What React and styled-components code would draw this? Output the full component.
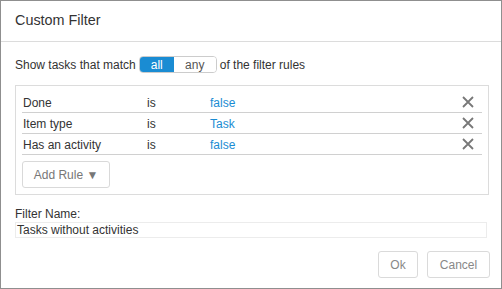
import React from "react";
import styled, { createGlobalStyle } from "styled-components";

const Global = createGlobalStyle`
  html, body { margin: 0; padding: 0; background: #fff; }
  body { font-family: "Liberation Sans", Arial, sans-serif; }
  * { box-sizing: border-box; }
`;

const Dialog = styled.div`
  width: 502px;
  height: 289px;
  border: 1px solid #8f8f8f;
  background: #fff;
  display: flex;
  flex-direction: column;
  color: #333;
  font-size: 12px;
`;

const Header = styled.div`
  height: 41px;
  border-bottom: 1px solid #dcdcdc;
  padding: 0 14px;
  display: flex;
  align-items: center;
`;

const Title = styled.h1`
  margin: 0;
  font-size: 14.4px;
  font-weight: normal;
  color: #333;
  padding-bottom: 2px;
`;

const Body = styled.div`
  flex: 1;
  padding: 0 14px;
  display: flex;
  flex-direction: column;
`;

const MatchLine = styled.div`
  display: flex;
  align-items: center;
  gap: 3px;
  margin-top: 14px;
  height: 17px;
`;

const Toggle = styled.div`
  display: flex;
  height: 17px;
  width: 78px;
  border: 1px solid #ccc;
  border-radius: 4px;
  overflow: hidden;
`;

const ToggleOpt = styled.span`
  display: flex;
  align-items: center;
  justify-content: center;
  width: ${(p) => p.$w}px;
  background: ${(p) => (p.$active ? "#1a8cd3" : "#fff")};
  color: ${(p) => (p.$active ? "#fff" : "#555")};
  font-size: 12px;
  line-height: 1;
`;

const RulesBox = styled.div`
  margin-top: 12px;
  width: 474px;
  border: 1px solid #dcdcdc;
  padding: 6px 6px 6px 6px;
  display: flex;
  flex-direction: column;
`;

const Row = styled.div`
  display: grid;
  grid-template-columns: 124px 63px 1fr 20px;
  align-items: center;
  height: 21px;
  border-bottom: 1px solid #d0d0d0;
  padding-left: 1px;
`;

const Cell = styled.span`
  color: ${(p) => (p.$value ? "#1a8cd3" : "#333")};
  padding-top: 1px;
`;

const Remove = styled.button`
  border: 0;
  background: none;
  padding: 0;
  margin: 0;
  width: 12px;
  height: 12px;
  display: flex;
  cursor: pointer;
`;

const AddRule = styled.button`
  margin-top: 6px;
  width: 88px;
  height: 27px;
  border: 1px solid #d9d9d9;
  border-radius: 3px;
  background: #fff;
  color: #777;
  font-family: "Liberation Sans", Arial, sans-serif;
  font-size: 12px;
  padding: 0;
`;

const Label = styled.div`
  margin-top: 13px;
  line-height: 13px;
  color: #333;
`;

const NameInput = styled.div`
  margin-top: 1px;
  width: 472px;
  height: 16px;
  border: 1px solid #ececec;
  padding: 0 1px;
  line-height: 14px;
  color: #333;
`;

const Footer = styled.div`
  display: flex;
  justify-content: flex-end;
  gap: 9px;
  padding: 0 11px 10px 0;
`;

const Btn = styled.button`
  width: ${(p) => p.$w}px;
  height: 27px;
  border: 1px solid #dadada;
  border-radius: 3px;
  background: #fff;
  color: #888;
  font-family: "Liberation Sans", Arial, sans-serif;
  font-size: 12px;
  padding: 0;
`;

const XIcon = () => (
  <svg width="12" height="12" viewBox="0 0 12 12">
    <path d="M1 1 L11 11 M11 1 L1 11" stroke="#787878" strokeWidth="1.8" fill="none" />
  </svg>
);

const rules = [
  { field: "Done", op: "is", value: "false" },
  { field: "Item type", op: "is", value: "Task" },
  { field: "Has an activity", op: "is", value: "false" },
];

export default function App() {
  return (
    <>
      <Global />
      <Dialog>
        <Header>
          <Title>Custom Filter</Title>
        </Header>
        <Body>
          <MatchLine>
            <span>Show tasks that match</span>
            <Toggle>
              <ToggleOpt $w={35} $active>all</ToggleOpt>
              <ToggleOpt $w={43}>any</ToggleOpt>
            </Toggle>
            <span>of the filter rules</span>
          </MatchLine>
          <RulesBox>
            {rules.map((r) => (
              <Row key={r.field}>
                <Cell>{r.field}</Cell>
                <Cell>{r.op}</Cell>
                <Cell $value>{r.value}</Cell>
                <Remove aria-label="remove">
                  <XIcon />
                </Remove>
              </Row>
            ))}
            <AddRule>Add Rule ▼</AddRule>
          </RulesBox>
          <Label>Filter Name:</Label>
          <NameInput>Tasks without activities</NameInput>
        </Body>
        <Footer>
          <Btn $w={40}>Ok</Btn>
          <Btn $w={63}>Cancel</Btn>
        </Footer>
      </Dialog>
    </>
  );
}
